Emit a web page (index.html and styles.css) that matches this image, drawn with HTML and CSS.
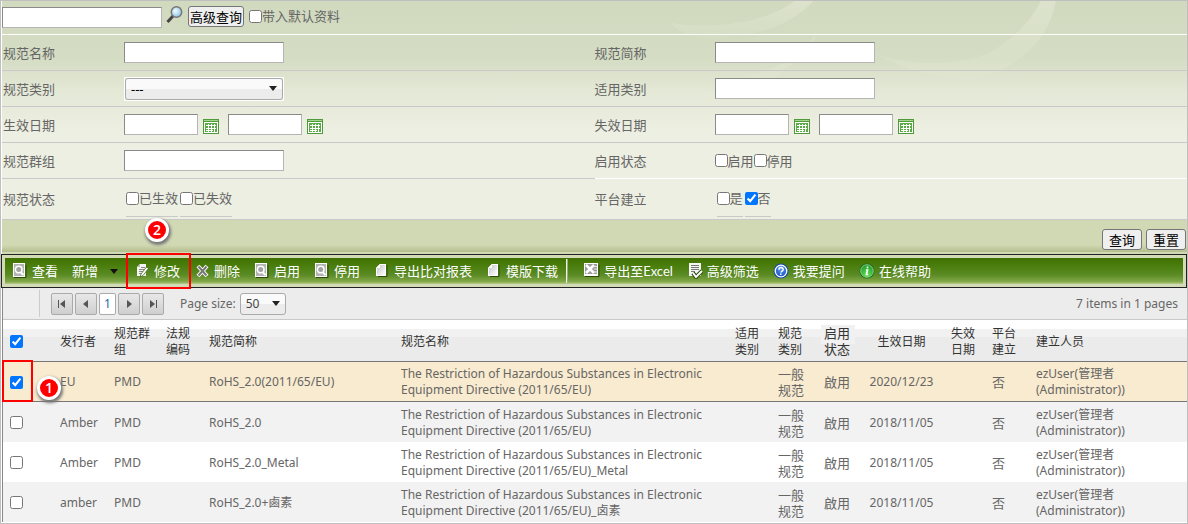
FILE: index.html
```html
<!DOCTYPE html>
<html lang="zh-CN">
<head>
<meta charset="utf-8">
<title>规范管理</title>
<link rel="stylesheet" href="styles.css">
</head>
<body>
<svg class="defs" width="0" height="0" aria-hidden="true">
  <defs>
    <linearGradient id="paper" x1="0" y1="0" x2="1" y2="1"><stop offset="0" stop-color="#c4c4c4"/><stop offset="1" stop-color="#fff"/></linearGradient>
    <radialGradient id="blue" cx=".5" cy=".3" r=".7"><stop offset="0" stop-color="#5b9bf2"/><stop offset="1" stop-color="#1550c0"/></radialGradient>
    <radialGradient id="green" cx=".5" cy=".8" r=".8"><stop offset="0" stop-color="#63e052"/><stop offset="1" stop-color="#1d9a2a"/></radialGradient>
    <radialGradient id="lens" cx=".4" cy=".4" r=".6"><stop offset="0" stop-color="#f4fbff"/><stop offset="1" stop-color="#8fc6e8"/></radialGradient>
    <linearGradient id="fade" x1="0" y1="0" x2="0" y2="1"><stop offset="0" stop-color="#eef0de"/><stop offset="1" stop-color="#eef0de" stop-opacity=".3"/></linearGradient>
  </defs>
  <symbol id="i-view" viewBox="0 0 16 16"><path d="M2 14.500h12V2" fill="none" stroke="#2b4a08"/><path fill="#fff" d="M1 0h12v14H1z"/><path fill="#b4b4b4" d="M2 1h10v12H2z"/><circle cx="6.700" cy="6.500" r="3.300" fill="#a2a2a2" stroke="#fff" stroke-width="1.600"/><path d="M9 9.500l2.500 2.500" stroke="#fff" stroke-width="2"/></symbol>
  <symbol id="i-edit" viewBox="0 0 16 16"><path d="M6 1h6v12H3V4z" fill="#f4f4f4"/><path d="M3 4l3-3v3z" fill="#bbb"/><path d="M5 6.500h5M5 8.500h4M5 10.500h2M7 4.500h4" stroke="#8a8a8a"/><path d="M14.500 5.500l-5.500 7-3 1.500 1-3 5.500-7z" fill="#fff" stroke="#3f6412" stroke-width=".8"/></symbol>
  <symbol id="i-del" viewBox="0 0 16 16"><path d="M4 3l9 10M13 3L4 13" stroke="#fff" stroke-width="4"/><path d="M4.500 3.500l8 9M12.500 3.500l-8 9" stroke="#777" stroke-width="2"/></symbol>
  <symbol id="i-page" viewBox="0 0 16 16"><path d="M4 13.500h9V2" fill="none" stroke="#2b4a08"/><path d="M6 1h6v12H2V5z" fill="#fff"/><path d="M6 5V2h5v10H3V5z" fill="url(#paper)"/><path d="M2 5l4-4v4z" fill="#fff"/></symbol>
  <symbol id="i-xls" viewBox="0 0 16 16"><path d="M1 13.500h14V2" fill="none" stroke="#2b4a08"/><path fill="#fff" d="M0 0h14v13H0z"/><path fill="#9b9b9b" d="M1 1h12v10H1z"/><path d="M2 2l8 8M10 2l-8 8" stroke="#fff" stroke-width="2.500"/><path d="M9 3.500h4M10 6h3M9 9h4" stroke="#eee"/></symbol>
  <symbol id="i-filter" viewBox="0 0 16 16"><path fill="#f5f5f5" d="M2 0h12v13H2z"/><path d="M4 2.500h8M4 4.500h8M4 6.500h8M4 8.500h4" stroke="#777"/><path d="M6 10l3 4 6-6" fill="none" stroke="#2b4a08" stroke-width="4"/><path d="M6 10l3 4 6-6" fill="none" stroke="#fff" stroke-width="2"/></symbol>
  <symbol id="i-ask" viewBox="0 0 16 16"><circle cx="8" cy="8" r="7.500" fill="#1748a8"/><circle cx="8" cy="8" r="5.800" fill="url(#blue)" stroke="#fff" stroke-width="1.300"/><path d="M6 6.700C6 3.800 10.300 4 10.200 6.500c0 1.500-2 1.700-2.200 3M7.800 10.500v1.600" fill="none" stroke="#fff" stroke-width="1.500"/></symbol>
  <symbol id="i-info" viewBox="0 0 16 16"><circle cx="8" cy="8" r="7.500" fill="#15691c"/><circle cx="8" cy="8" r="6.300" fill="url(#green)" stroke="#a9dba1" stroke-width=".8"/><path d="M8.500 3.500v1.800M7 7h1.600L7.300 11.500H9.200" fill="none" stroke="#fff" stroke-width="1.600"/></symbol>
  <symbol id="i-cal" viewBox="0 0 16 16"><path fill="#4e9a3b" d="M0 1h16v15H0z"/><path fill="#a5d58c" d="M1 2h14v1H1z"/><path fill="#fff" d="M1 4h14v11H1z"/><path fill="#5aaa46" d="M2 5h12v9H2z"/><path d="M3 7.500h10M3 10.500h10M3 12.500h7M5.500 6v8M8.500 6v8M11.500 6v8" stroke="#fff"/></symbol>
</svg>

<main class="page">
  <section class="query">
    <svg class="swirl" viewBox="0 0 594 130" aria-hidden="true">
      <path d="M76 22Q110 28 155 20Q185 12 200 0L219 0Q190 32 130 36Q90 40 76 22z"/>
      <path d="M280 53Q345 72 396 52Q432 30 447 0L462 0Q452 56 385 78Q330 80 280 53z"/>
      <path d="M222 28Q214 56 160 74Q100 92 60 130L190 130Q150 90 200 62Q222 50 222 28z" opacity=".6"/>
    </svg>
    <div class="search">
      <input type="text" class="field" aria-label="关键字">
      <svg class="lens" viewBox="0 0 18 18" aria-hidden="true"><path d="M7 10l-5.500 6" stroke="#444" stroke-width="3"/><circle cx="10.500" cy="6" r="5.200" fill="url(#lens)" stroke="#777" stroke-width="1.500"/></svg>
      <button type="button" class="btn btn-tight">高级查询</button>
      <label class="check"><input type="checkbox">带入默认资料</label>
    </div>

    <form class="form">
      <div class="cell"><label for="f1">规范名称</label><div class="control"><input id="f1" type="text" class="field"></div></div>
      <div class="cell right"><label for="f2">规范简称</label><div class="control"><input id="f2" type="text" class="field"></div></div>
      <div class="cell"><label for="f3">规范类别</label><div class="control"><div class="combo"><select id="f3"><option>---</option></select></div></div></div>
      <div class="cell right"><label for="f4">适用类别</label><div class="control"><input id="f4" type="text" class="field"></div></div>
      <div class="cell"><label for="f5">生效日期</label><div class="control dates">
        <input id="f5" type="text" class="field date"><svg class="cal"><use href="#i-cal"/></svg>
        <input type="text" class="field date" aria-label="生效日期止"><svg class="cal"><use href="#i-cal"/></svg></div></div>
      <div class="cell right"><label for="f6">失效日期</label><div class="control dates">
        <input id="f6" type="text" class="field date"><svg class="cal"><use href="#i-cal"/></svg>
        <input type="text" class="field date" aria-label="失效日期止"><svg class="cal"><use href="#i-cal"/></svg></div></div>
      <div class="cell"><label for="f7">规范群组</label><div class="control"><input id="f7" type="text" class="field"></div></div>
      <div class="cell right pale"><span>启用状态</span><div class="control"><label class="check"><input type="checkbox">启用</label><label class="check"><input type="checkbox">停用</label></div></div>
      <div class="cell tall"><span>规范状态</span><div class="control lined"><label class="check"><input type="checkbox">已生效</label><label class="check"><input type="checkbox">已失效</label></div></div>
      <div class="cell right tall"><span>平台建立</span><div class="control lined"><label class="check"><input type="checkbox">是</label><label class="check"><input type="checkbox" checked>否</label></div></div>
    </form>
    <div class="actions"><button type="button" class="btn">查询</button><button type="button" class="btn">重置</button></div>
  </section>

  <nav class="toolbar">
    <div class="tools">
      <button type="button"><svg><use href="#i-view"/></svg>查看</button>
      <button type="button" class="add">新增<i class="caret"></i></button>
      <button type="button" class="marked"><svg><use href="#i-edit"/></svg>修改<span class="frame"></span><span class="pin">2</span></button>
      <button type="button"><svg><use href="#i-del"/></svg>删除</button>
      <button type="button"><svg><use href="#i-view"/></svg>启用</button>
      <button type="button"><svg><use href="#i-view"/></svg>停用</button>
      <button type="button"><svg><use href="#i-page"/></svg>导出比对报表</button>
      <button type="button"><svg><use href="#i-page"/></svg>模版下载</button>
      <span class="sep"></span>
      <button type="button"><svg><use href="#i-xls"/></svg>导出至Excel</button>
      <button type="button"><svg><use href="#i-filter"/></svg>高级筛选</button>
      <button type="button"><svg><use href="#i-ask"/></svg>我要提问</button>
      <button type="button"><svg><use href="#i-info"/></svg>在线帮助</button>
    </div>
  </nav>

  <section class="grid">
    <div class="pager">
      <span class="stub"></span>
      <div class="pages">
        <button type="button" aria-label="First"><svg viewBox="0 0 10 10"><path d="M1 1h1v8H1zM8 1v8L3 5z"/></svg></button>
        <button type="button" aria-label="Previous"><svg viewBox="0 0 10 10"><path d="M7 1v8L2 5z"/></svg></button>
        <button type="button" class="current">1</button>
        <button type="button" aria-label="Next"><svg viewBox="0 0 10 10"><path d="M3 1v8l5-4z"/></svg></button>
        <button type="button" aria-label="Last"><svg viewBox="0 0 10 10"><path d="M8 1h1v8H8zM2 1v8l5-4z"/></svg></button>
      </div>
      <label for="size">Page size:</label>
      <div class="combo small"><select id="size"><option>50</option></select></div>
      <span class="total">7 items in 1 pages</span>
    </div>
    <table>
      <colgroup><col class="c-check"><col class="c-issuer"><col class="c-group"><col class="c-code"><col class="c-short"><col><col class="c-code"><col class="c-kind"><col class="c-state"><col class="c-date"><col class="c-end"><col class="c-state"><col class="c-user"></colgroup>
      <thead><tr>
        <th><input type="checkbox" checked aria-label="全选"></th><th>发行者</th><th>规范群<br>组</th><th>法规<br>编码</th><th>规范简称</th><th>规范名称</th><th>适用<br>类别</th><th>规范<br>类别</th><th class="wide"><span>启用<br>状态</span></th><th class="mid">生效日期</th><th>失效<br>日期</th><th>平台<br>建立</th><th>建立人员</th>
      </tr></thead>
      <tbody>
        <tr class="selected"><td class="marked"><input type="checkbox" checked aria-label="EU"><span class="frame"></span><span class="pin">1</span></td><td>EU</td><td>PMD</td><td></td><td>RoHS_2.0(2011/65/EU)</td><td>The Restriction of Hazardous Substances in Electronic Equipment Directive (2011/65/EU)</td><td></td><td class="han">一般<br>规范</td><td class="han">啟用</td><td class="mid">2020/12/23</td><td></td><td class="han">否</td><td>ezUser(管理者<br>(Administrator))</td></tr>
        <tr><td><input type="checkbox" aria-label="RoHS_2.0"></td><td>Amber</td><td>PMD</td><td></td><td>RoHS_2.0</td><td>The Restriction of Hazardous Substances in Electronic Equipment Directive (2011/65/EU)</td><td></td><td class="han">一般<br>规范</td><td class="han">啟用</td><td class="mid">2018/11/05</td><td></td><td class="han">否</td><td>ezUser(管理者<br>(Administrator))</td></tr>
        <tr><td><input type="checkbox" aria-label="RoHS_2.0_Metal"></td><td>Amber</td><td>PMD</td><td></td><td>RoHS_2.0_Metal</td><td>The Restriction of Hazardous Substances in Electronic Equipment Directive (2011/65/EU)_Metal</td><td></td><td class="han">一般<br>规范</td><td class="han">啟用</td><td class="mid">2018/11/05</td><td></td><td class="han">否</td><td>ezUser(管理者<br>(Administrator))</td></tr>
        <tr><td><input type="checkbox" aria-label="RoHS_2.0+鹵素"></td><td>amber</td><td>PMD</td><td></td><td>RoHS_2.0+鹵素</td><td>The Restriction of Hazardous Substances in Electronic Equipment Directive (2011/65/EU)_卤素</td><td></td><td class="han">一般<br>规范</td><td class="han">啟用</td><td class="mid">2018/11/05</td><td></td><td class="han">否</td><td>ezUser(管理者<br>(Administrator))</td></tr>
      </tbody>
    </table>
  </section>
</main>
</body>
</html>
```

FILE: styles.css
```css
* { box-sizing: border-box; }
body {
  margin: 0;
  color: #666;
  font: 13px/16px "Noto Sans", "Noto Sans CJK SC", sans-serif;
}
button, input, select { font: inherit; margin: 0; }
input[type="checkbox"] { width: 13px; height: 13px; }
.defs { position: absolute; }
.page { border: 1px solid #bfbfbf; background: #fff; padding: 0 0 1px 1px; }

.query {
  position: relative;
  border-bottom: 2px solid #d1d9b4;
  background: linear-gradient(#d1dabf 0, #d4dcc3 56px, #e4e8d6 90px, #edefe2 130px);
}
.swirl {
  position: absolute;
  top: 0;
  left: 50%;
  width: 50%;
  fill: url(#fade);
  opacity: .4;
}
.search {
  display: flex;
  align-items: flex-start;
  height: 34px;
  padding-top: 5px;
  border-bottom: 1px solid #fff;
}
.search > *, .form, .actions { position: relative; }
.search .field { margin-top: 1px; }
.field {
  width: 160px;
  height: 21px;
  padding: 0 2px;
  background: #fff;
  border: 1px solid #b5b5b5;
  border-top-color: #8a8a8a;
  border-left-color: #8a8a8a;
}
.lens { width: 18px; height: 18px; margin: 0 4px; }
.btn {
  height: 21px;
  padding: 0 6px;
  color: #000;
  line-height: 18px;
  background: #efefef;
  border: 1px solid #767676;
  border-radius: 3px;
}
.btn-tight { padding: 0 1px; margin-right: 5px; }
.check { display: inline-flex; align-items: center; white-space: nowrap; }
.search .check { margin-top: 2px; }

.form { display: grid; grid-template-columns: 1fr 1fr; }
.cell {
  display: grid;
  grid-template-columns: 121px 1fr;
  align-items: center;
  min-height: 36px;
  padding-left: 1px;
  border-bottom: 1px solid #c9c9c9;
}
.cell.right { grid-template-columns: 120px 1fr; padding-left: 0; }
.cell.pale { border-bottom-color: #fff; }
.cell.tall { min-height: 41px; }
.control { display: flex; align-items: center; }
.control.lined { gap: 2px; padding-left: 2px; align-self: end; padding-bottom: 2px; }
.lined .check { height: 28px; padding-bottom: 9px; border-bottom: 1px solid #c9c9c9; }
.date { width: 74px; }
.cal { width: 16px; height: 16px; margin: 2px 9px 0 5px; }

.combo { position: relative; width: 160px; }
.combo::after, .caret {
  content: "";
  border: 4px solid transparent;
  border-top: 5px solid #222;
  border-bottom: 0;
}
.combo::after { position: absolute; right: 6px; top: 8px; pointer-events: none; }
.combo select {
  display: block;
  width: 100%;
  height: 22px;
  padding: 0 5px;
  appearance: none;
  color: #000;
  background: linear-gradient(#fafafa 50%, #ececec 50%);
  border: 1px solid #aaa;
  border-radius: 3px;
}
.form .combo { border: 1px solid #fff; }

.actions {
  display: flex;
  justify-content: flex-end;
  gap: 4px;
  height: 32px;
  padding: 9px 1px 0;
  background: linear-gradient(#d1d9b4 78%, #b6bf90 98%);
}

.toolbar {
  padding: 3px;
  margin: 0 0 0 -1px;
  border: 1px solid #222;
  background: #d3dab6;
}
.tools {
  display: flex;
  align-items: center;
  gap: 14px;
  height: 26px;
  padding-left: 7px;
  color: #fff;
  font-family: Lato, "Noto Sans CJK SC", sans-serif;
  background: linear-gradient(#3f7100, #4c8010 35%, #5b8b25 65%, #7fa645 90%, #b5ca8b);
}
.tools button {
  position: relative;
  display: flex;
  align-items: center;
  gap: 4px;
  padding: 0;
  color: inherit;
  background: none;
  border: 0;
  white-space: nowrap;
}
.tools svg { width: 16px; height: 16px; }
.tools .add { gap: 12px; margin-right: 2px; }
.caret { border-top-color: #111; }
.sep { width: 2px; height: 24px; margin: 0 2px 0 -6px; border-left: 1px solid #eee; border-right: 1px solid #9ab06e; }

.marked { position: relative; }
.frame { position: absolute; border: 2px solid #f00; pointer-events: none; }
.pin {
  position: absolute;
  width: 24px;
  height: 24px;
  border: 3px solid #fff;
  border-radius: 50%;
  color: #fff;
  background: #f00;
  font: 600 14px/18px "Open Sans", sans-serif;
  text-align: center;
  box-shadow: 1px 2px 3px 1px #777;
}
.tools .frame { inset: -10px -11px -10px -8px; }
.tools .pin { left: 11px; top: -45px; }
td .frame { inset: -2px auto -1px -1px; width: 31px; }
td .pin { left: 34px; top: 14px; }

.grid { border-left: 1px solid #888; }
.pager {
  display: flex;
  align-items: center;
  height: 32px;
  padding-right: 9px;
  font-size: 12px;
  background: #ececec;
  border-bottom: 1px solid #c9c9c9;
}
.stub { width: 37px; height: 27px; margin-right: 11px; border-right: 1px solid #ccc; background: #eee; }
.pages { display: flex; gap: 2px; margin-right: 16px; }
.pages button {
  width: 22px;
  height: 22px;
  padding: 0;
  border: 1px solid #aaa;
  border-radius: 2px;
  background: linear-gradient(#e8e8e8, #cfcfcf);
  line-height: 20px;
}
.pages .current { width: 17px; background: #fff; color: #1d6aa5; }
.pages svg { display: block; width: 10px; height: 10px; margin: 0 auto; fill: #555; }
.combo.small { width: 46px; margin-left: 4px; }
.combo.small select { color: #444; }
.total { margin-left: auto; }

table { width: 100%; table-layout: fixed; border-collapse: separate; border-spacing: 0; font-size: 12px; }
.c-check { width: 49px; }
.c-issuer { width: 54px; }
.c-group { width: 52px; }
.c-code { width: 43px; }
.c-short { width: 192px; }
.c-kind { width: 46px; }
.c-state { width: 44px; }
.c-date { width: 83px; }
.c-end { width: 41px; }
.c-user { width: 159px; }
th, td { padding: 4px 0 3px 8px; text-align: left; vertical-align: middle; }
th:first-child, td:first-child { padding-left: 7px; }
th input, td input { display: block; }
th {
  height: 42px;
  padding-top: 5px;
  color: #333;
  font-weight: normal;
  border-bottom: 1px solid #777;
  background: linear-gradient(#fff 9px, #f1f1f1 9px, #f1f1f1 17px, #ebebeb 17px);
}
th.wide { font-size: 13px; padding: 0 0 0 5px; }
th.wide span { display: inline-block; padding: 0 5px 0 3px; background: linear-gradient(#f1f1f1 60%, transparent 60%); }
th.mid, td.mid { padding-left: 0; text-align: center; }
td { height: 40px; }
td.han { font-size: 13px; }
tbody tr:nth-child(even) { background: #f2f2f2; }
tbody tr.selected { background: #f9ebcf; }
.selected td { border-bottom: 1px solid #777; }
```
